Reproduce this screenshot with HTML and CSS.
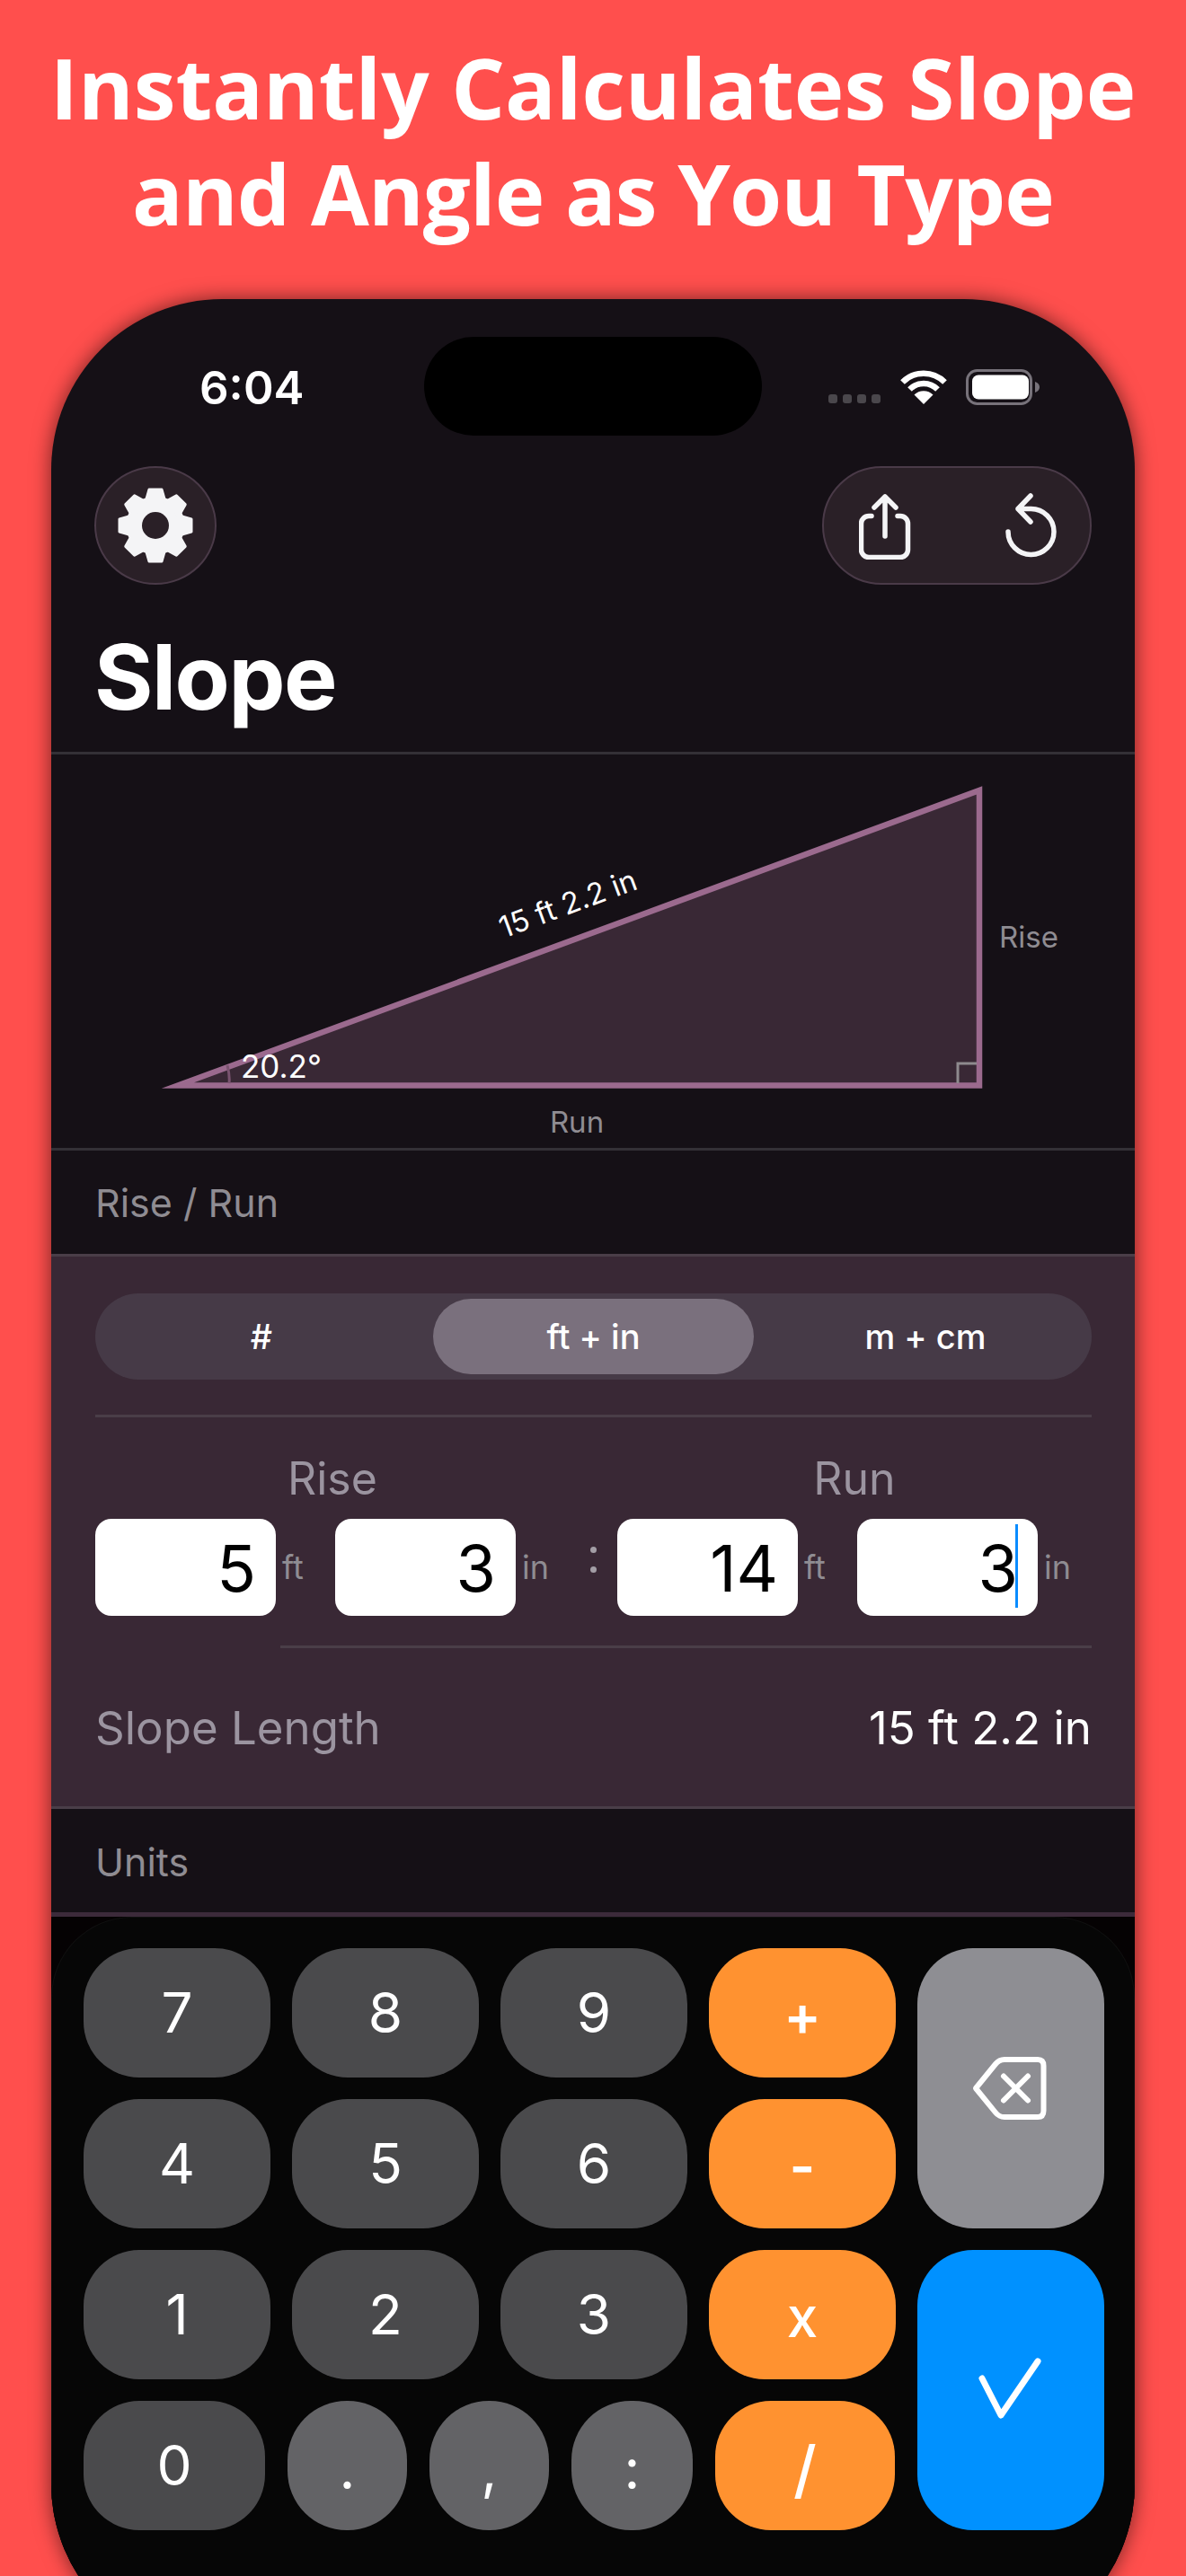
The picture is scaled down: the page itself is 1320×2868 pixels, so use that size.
FILE: index.html
```html
<!DOCTYPE html>
<html lang="en">
<head>
<meta charset="utf-8">
<title>Slope</title>
<link rel="stylesheet" href="styles.css">
</head>
<body>
<main class="page">
  <h1 class="headline">Instantly Calculates Slope<br><span class="headline-second">and Angle as You Type</span></h1>
  <section class="phone">
    <div class="status">
      <div class="time">6:04</div>
      <div class="island"></div>
      <div class="indicators">
        <div class="dots"><i></i><i></i><i></i><i></i></div>
        <svg class="wifi" width="52" height="38" viewBox="0 0 52 38"><path d="M2.500 13.500a33 33 0 0 1 47 0M10.500 21.500a21.500 21.500 0 0 1 31 0" fill="none" stroke="#fff" stroke-width="6.500"/><path d="M26 38l-10.500-10.500a15 15 0 0 1 21 0z" fill="#fff"/></svg>
        <svg class="battery" width="83" height="40" viewBox="0 0 83 40"><rect x="1.500" y="1.500" width="71" height="37" rx="11" fill="none" stroke="#77727a" stroke-width="3"/><rect x="7" y="6.500" width="63" height="27" rx="7" fill="#fff"/><path d="M77 14c3 1 5 3 5 6s-2 5-5 6z" fill="#77727a"/></svg>
      </div>
    </div>
    <div class="nav">
      <button class="round-btn">
        <svg width="94" height="94" viewBox="-47 -47 94 94">
          <g class="gear">
            <circle r="31"/>
            <path d="M-7 -40H7L11 -26H-11Z"/>
            <path transform="rotate(45)" d="M-7 -40H7L11 -26H-11Z"/>
            <path transform="rotate(90)" d="M-7 -40H7L11 -26H-11Z"/>
            <path transform="rotate(135)" d="M-7 -40H7L11 -26H-11Z"/>
            <path transform="rotate(180)" d="M-7 -40H7L11 -26H-11Z"/>
            <path transform="rotate(225)" d="M-7 -40H7L11 -26H-11Z"/>
            <path transform="rotate(270)" d="M-7 -40H7L11 -26H-11Z"/>
            <path transform="rotate(315)" d="M-7 -40H7L11 -26H-11Z"/>
          </g>
          <circle class="gear-hole" r="15"/>
        </svg>
      </button>
      <div class="pill-btn">
        <svg width="60" height="76" viewBox="0 0 60 76"><path class="ico" d="M14 27.500H11A8.500 8.500 0 0 0 2.500 36V65A8.500 8.500 0 0 0 11 73.500H46A8.500 8.500 0 0 0 54.500 65V36A8.500 8.500 0 0 0 46 27.500H43M29 50V6M17 18L29 6L41 18"/></svg>
        <svg width="60" height="76" viewBox="0 0 60 76"><path class="ico" d="M5 45A25.500 25.500 0 1 0 30.500 19.500L16 19.500M30 5L16 19.500L30 34"/></svg>
      </div>
    </div>
    <div class="title-row"><h2 class="title">Slope</h2></div>
    <div class="diagram">
      <svg width="1206" height="438" viewBox="0 0 1206 438">
        <path class="tri" d="M141 368.500H1033V40Z"/>
        <path class="tri-arc" d="M196 346Q199 358 198 366"/>
        <path class="tri-sq" d="M1009 366V344H1030"/>
        <text class="dg-value dg-slope" transform="translate(579 177) rotate(-20.200)" text-anchor="middle">15 ft 2.2 in</text>
        <text class="dg-value" x="211" y="360">20.2°</text>
        <text class="dg-label" x="1055" y="215">Rise</text>
        <text class="dg-label" x="585" y="421" text-anchor="middle">Run</text>
      </svg>
    </div>
    <div class="section-head">Rise / Run</div>
    <div class="panel">
      <div class="segments">
        <div class="seg seg-first">#</div>
        <div class="seg seg-on">ft + in</div>
        <div class="seg seg-last">m + cm</div>
      </div>
      <div class="rule"></div>
      <div class="ratio">
        <div class="side">
          <div class="side-label">Rise</div>
          <div class="fields">
            <div class="field">5</div><span class="unit">ft</span>
            <div class="field">3</div><span class="unit">in</span>
          </div>
        </div>
        <div class="colon"><i></i><i></i></div>
        <div class="side">
          <div class="side-label">Run</div>
          <div class="fields">
            <div class="field">14</div><span class="unit">ft</span>
            <div class="field field-focus">3<b class="caret"></b></div><span class="unit">in</span>
          </div>
        </div>
      </div>
      <div class="rule rule-short"></div>
      <div class="result">
        <span class="result-label">Slope Length</span>
        <span class="result-value">15 ft 2.2 in</span>
      </div>
    </div>
    <div class="section-head section-units">Units</div>
    <div class="kb-wrap">
      <div class="keyboard">
        <div class="keys">
          <div class="key">7</div><div class="key">8</div><div class="key">9</div><div class="key key-op"><span>+</span></div>
          <div class="key key-back">
            <svg width="86" height="74" viewBox="0 0 86 74"><path class="ico-w" d="M5 37L27 10Q31 5 37 5H74Q80.500 5 80.500 12V62Q80.500 69 74 69H37Q31 69 27 64Z"/><path class="ico-x" d="M36 23.500L63 50.500M63 23.500L36 50.500"/></svg>
          </div>
          <div class="key">4</div><div class="key">5</div><div class="key">6</div><div class="key key-op"><span>-</span></div>
          <div class="key">1</div><div class="key">2</div><div class="key">3</div><div class="key key-op"><span class="op-x">x</span></div>
          <div class="key key-ok">
            <svg width="76" height="76" viewBox="0 0 76 76"><path class="ico-c" d="M6 25L27 66L68 6"/></svg>
          </div>
          <div class="last-row">
            <div class="key k0">0</div>
            <div class="key k-sym"><span>.</span></div>
            <div class="key k-sym"><span>,</span></div>
            <div class="key k-sym"><span>:</span></div>
            <div class="key key-op k-div"><span>/</span></div>
          </div>
        </div>
      </div>
    </div>
  </section>
</main>
</body>
</html>
```
FILE: styles.css
```css
* { box-sizing: border-box; }
html, body { margin: 0; padding: 0; }
body { background: #ff4f4d; font-family: Inter, "Liberation Sans", sans-serif; }
.page { width: 1320px; height: 2868px; overflow: hidden; background: #ff4f4d; }
.headline { margin: 0; padding: 38px 0 0; height: 333px; text-align: center; color: #fff; font-family: "Open Sans", sans-serif; font-weight: 700; font-size: 94px; line-height: 118px; }
.headline-second { letter-spacing: -0.900px; }
.phone { width: 1206px; height: 2622px; margin-left: 57px; border-radius: 190px; background: #151016; box-shadow: 0 0 22px rgba(0,0,0,.55); overflow: hidden; color: #fff; }
.phone::before { content: ""; display: block; height: 42px; }
.status { display: grid; grid-template-columns: 415px 376px 1fr; height: 110px; }
.time { padding: 27px 0 0 165px; font-size: 51px; line-height: 60px; font-weight: 600; }
.island { width: 376px; height: 110px; border-radius: 55px; background: #000; }
.indicators { display: flex; align-items: flex-start; padding: 36px 0 0 74px; }
.dots { display: flex; gap: 6px; margin-top: 28px; }
.dots i { display: block; width: 10px; height: 10px; border-radius: 3px; background: #4a474c; }
.wifi { margin-left: 22px; margin-top: 1px; }
.battery { margin-left: 21px; }
.nav { display: flex; justify-content: space-between; margin-top: 34px; padding: 0 48px; }
.round-btn { width: 136px; height: 132px; padding: 0; border-radius: 50%; border: 2px solid #4a3a48; background: #2a2027; display: flex; align-items: center; justify-content: center; }
.gear path, .gear circle { fill: #f4f4f6; stroke: #f4f4f6; stroke-width: 3; stroke-linejoin: round; }
.gear-hole { fill: #2a2027; }
.pill-btn { width: 300px; height: 132px; border-radius: 66px; border: 2px solid #4a3a48; background: #2a2027; display: flex; align-items: center; justify-content: space-between; padding: 0 36px 0 39px; }
.pill-btn svg { display: block; }
.ico { fill: none; stroke: #f4f4f6; stroke-width: 5.500; stroke-linecap: round; stroke-linejoin: round; }
.title-row { height: 189px; padding: 43px 0 0 48px; border-bottom: 3px solid #333036; }
.title { margin: 0; font-size: 100px; line-height: 120px; font-weight: 700; letter-spacing: -1.500px; }
.diagram { height: 441px; border-bottom: 3px solid #333036; }
.diagram svg { display: block; }
.tri { fill: #392835; stroke: #9b6a8e; stroke-width: 6.500; stroke-linejoin: miter; stroke-miterlimit: 10; }
.tri-arc { fill: none; stroke: #7a5470; stroke-width: 3; }
.tri-sq { fill: none; stroke: #8e8a8e; stroke-width: 3; }
.dg-value { font-size: 35px; fill: #fff; }
.dg-slope { font-size: 33px; }
.dg-label { font-size: 33px; fill: #8f8c92; }
.section-head { height: 118px; padding: 33px 0 0 49px; font-size: 43px; line-height: 50px; color: #8f8c92; border-bottom: 3px solid #4a3e48; }
.panel { height: 615px; padding: 41px 48px 0 49px; background: #392835; border-bottom: 3px solid #4a3e48; }
.segments { display: grid; grid-template-columns: 1fr 357px 1fr; height: 96px; padding: 6px; border-radius: 48px; background: #463a47; }
.seg { display: flex; align-items: center; justify-content: center; border-radius: 42px; font-size: 38px; font-weight: 500; }
.seg-first { padding-right: 12px; }
.seg-last { padding-left: 12px; }
.seg-on { background: #7a707d; }
.rule { height: 3px; margin-top: 39px; background: #4a3e48; }
.ratio { display: flex; }
.side { width: 528px; }
.side-label { height: 113px; padding-top: 38px; text-align: center; font-size: 50px; line-height: 60px; color: #9b94a0; }
.fields { display: grid; grid-template-columns: 201px 66px 201px 60px; }
.field { position: relative; height: 108px; border-radius: 18px; background: #fff; color: #000; text-align: right; padding-right: 22px; font-size: 72px; line-height: 110px; }
.caret { position: absolute; right: 22px; top: 6px; width: 3px; height: 93px; background: #0a8cff; }
.unit { padding: 0 0 0 7px; font-size: 36px; line-height: 108px; color: #8f8c92; }
.colon { width: 53px; display: flex; flex-direction: column; align-items: center; gap: 15px; padding: 144px 0 0 0; }
.colon i { display: block; width: 7px; height: 7px; border-radius: 50%; background: #a39ea6; }
.rule-short { margin-top: 33px; margin-left: 206px; }
.result { display: flex; justify-content: space-between; align-items: center; height: 177px; font-size: 51px; }
.result-label { color: #9b94a0; }
.section-units { height: 120px; padding-top: 34px; border-bottom: 5px solid #3c2a3a; }
.kb-wrap { background: #050203; }
.keyboard { height: 900px; background: #060606; border: 1px solid #101010; border-bottom: 0; border-radius: 90px 90px 0 0; padding: 34px 0 0 35px; }
.keys { display: grid; grid-template-columns: repeat(5, 208px); grid-auto-rows: 144px; gap: 24px; }
.key { display: flex; align-items: center; justify-content: center; border-radius: 62px; background: #4a4a4c; font-size: 62px; line-height: 1; }
.key-op { background: #ff9230; font-weight: 600; }
.key-op span { position: relative; top: 3px; }
.key-op .op-x { font-weight: 500; }
.k-div { font-size: 70px; font-weight: 500; }
.k-div span { top: 4px; }
.key-back { grid-column: 5; grid-row: 1 / span 2; background: #8e8e93; }
.key-back svg { margin-right: 3px; }
.key-ok { grid-column: 5; grid-row: 3 / span 2; background: #0091ff; }
.last-row { grid-column: 1 / span 4; display: grid; grid-template-columns: 202px 133px 133px 135px 200px; column-gap: 25px; }
.k-sym { background: #636366; border-radius: 66px; padding-top: 8px; }
.ico-w { fill: none; stroke: #fff; stroke-width: 6; stroke-linejoin: round; }
.ico-x { fill: none; stroke: #fff; stroke-width: 6; stroke-linecap: round; }
.ico-c { fill: none; stroke: #fff; stroke-width: 7; stroke-linecap: round; stroke-linejoin: round; }
```
